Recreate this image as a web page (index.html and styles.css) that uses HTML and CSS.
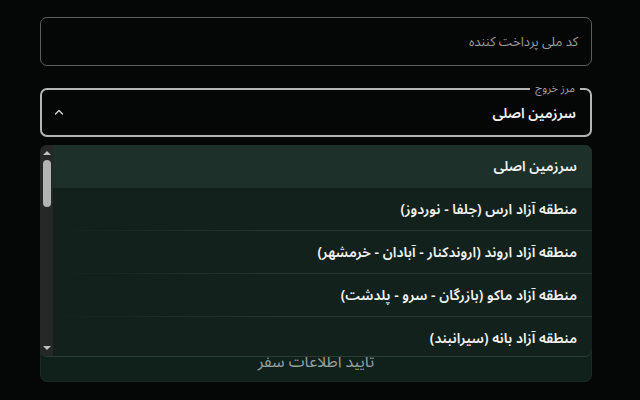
FILE: index.html
```html
<!DOCTYPE html>
<html lang="fa" dir="rtl">
<head>
<meta charset="utf-8">
<title>اطلاعات سفر</title>
<link rel="stylesheet" href="styles.css">
</head>
<body>
<form class="form">
  <div class="field">
    <span class="placeholder">کد ملی پرداخت کننده</span>
  </div>

  <div class="select">
    <span class="select-label">مرز خروج</span>
    <span class="select-value">سرزمین اصلی</span>
    <svg class="caret" width="10" height="6" viewBox="0 0 10 6" aria-hidden="true">
      <polyline points="1.5,5 5,1.5 8.5,5" fill="none" stroke="#d8d8d8" stroke-width="1.4" stroke-linecap="round" stroke-linejoin="round"/>
    </svg>

    <div class="menu">
      <ul class="options">
        <li class="option is-selected">سرزمین اصلی</li>
        <li class="option">منطقه آزاد ارس (جلفا - نوردوز)</li>
        <li class="option">منطقه آزاد اروند (اروندکنار - آبادان - خرمشهر)</li>
        <li class="option">منطقه آزاد ماکو (بازرگان - سرو - پلدشت)</li>
        <li class="option">منطقه آزاد بانه (سیرانبند)</li>
      </ul>
      <div class="scrollbar">
        <span class="arrow arrow-up"></span>
        <span class="thumb"></span>
        <span class="arrow arrow-down"></span>
      </div>
    </div>
  </div>

  <button type="button" class="submit">تایید اطلاعات سفر</button>
</form>
</body>
</html>
```

FILE: styles.css
```css
html, body {
  margin: 0;
  padding: 0;
  background: #050606;
}

body {
  width: 640px;
  height: 400px;
  overflow: hidden;
  font-family: "Noto Sans Arabic", sans-serif;
}

.form {
  display: flex;
  flex-direction: column;
  padding: 17px 48px 0 40px;
}

/* text input */
.field {
  height: 47px;
  border: 1px solid #5c5e5d;
  border-radius: 7px;
  display: flex;
  align-items: center;
  padding: 0 13px;
}

.placeholder {
  font-size: 13px;
  line-height: 18px;
  color: #9c9e9d;
}

/* select (open) */
.select {
  position: relative;
  margin-top: 22px;
  height: 43px;
  border: 2px solid #b4b6b5;
  border-radius: 7px;
  display: flex;
  align-items: center;
  justify-content: space-between;
  padding: 2px 14px 0 12px;
}

.select-label {
  position: absolute;
  top: -8px;
  right: 10px;
  padding: 0 5px;
  background: #050606;
  font-size: 11px;
  line-height: 13px;
  color: #a2a4a3;
}

.select-value {
  font-size: 14px;
  line-height: 20px;
  font-weight: 600;
  color: #f4f4f4;
}

.caret {
  display: block;
  margin-top: -4px;
}

/* dropdown menu */
.menu {
  position: absolute;
  top: 55px;
  left: -2px;
  right: -2px;
  height: 211px;
  display: flex;
  border-radius: 7px;
  overflow: hidden;
  background: #13211c;
  box-shadow: 0 1px 0 #2b3a35;
  z-index: 2;
}

.options {
  list-style: none;
  margin: 0;
  padding: 0;
  flex: 1;
}

.option {
  height: 43px;
  display: flex;
  align-items: center;
  padding: 0 15px;
  font-size: 14px;
  line-height: 20px;
  font-weight: 600;
  color: #f1f2f1;
  background-image: linear-gradient(to left, #26362f 0%, #25352f 60%, rgba(38, 54, 47, 0) 100%);
  background-size: 100% 1px;
  background-position: bottom;
  background-repeat: no-repeat;
}

.option.is-selected {
  background: #1d302a;
}

/* scrollbar on the start side */
.scrollbar {
  width: 13px;
  background: #262827;
  display: flex;
  flex-direction: column;
  align-items: center;
  padding-top: 6px;
}

.arrow {
  width: 0;
  height: 0;
  border-left: 4px solid transparent;
  border-right: 4px solid transparent;
}

.arrow-up {
  border-bottom: 4px solid #bfc1c0;
}

.arrow-down {
  border-top: 4px solid #bfc1c0;
  margin-top: auto;
  margin-bottom: 6px;
}

.thumb {
  margin-top: 5px;
  width: 8px;
  height: 47px;
  border-radius: 4px;
  background: #b2b4b3;
}

/* primary button, partly under the menu */
.submit {
  margin-top: 203px;
  height: 42px;
  border: 1px solid #1b2a25;
  border-radius: 7px;
  background: #10201b;
  color: #98a29e;
  font-family: inherit;
  font-size: 16px;
  padding-top: 3px;
}
```
